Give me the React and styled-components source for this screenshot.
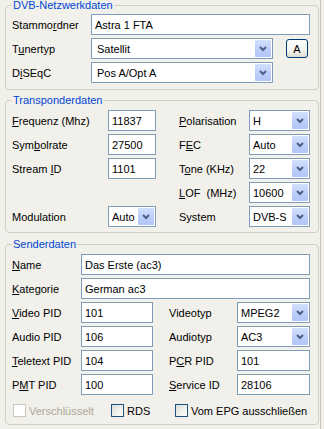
import React from "react";
import styled, { createGlobalStyle } from "styled-components";

const colors = {
  bg: "#f1f0ea",
  groupLine: "#d0d0bf",
  legend: "#0046d5",
  field: "#7f9db9",
  text: "#000000",
  disabled: "#aca899",
};

const GlobalStyle = createGlobalStyle`
  html, body {
    margin: 0;
    padding: 0;
    background: ${colors.bg};
  }
  body {
    font-family: Tahoma, "Liberation Sans", Arial, sans-serif;
    font-size: 11px;
    color: ${colors.text};
    overflow: hidden;
  }
`;

const Page = styled.div`
  width: 321px;
  height: 429px;
  box-sizing: border-box;
  padding-left: 5px;
  border-right: 1px solid #c9c6b6;
  display: flex;
  flex-direction: column;
  overflow: hidden;
`;

const Group = styled.fieldset`
  width: 314px;
  box-sizing: border-box;
  margin: ${(p) => p.$top}px 0 0 0;
  padding: ${(p) => p.$padTop || 3}px 8px ${(p) => p.$bottom}px 6px;
  border: 1px solid ${colors.groupLine};
  border-radius: 4px;
  min-inline-size: 0;
`;

const Legend = styled.legend`
  color: ${colors.legend};
  line-height: 13px;
  padding: 0 1px;
  margin-left: 0;
`;

const Grid = styled.div`
  display: grid;
  grid-template-columns: ${(p) => p.$cols};
  grid-auto-rows: 21px;
  row-gap: 3px;
  align-items: center;
`;

const Label = styled.span`
  white-space: pre;
  grid-column: ${(p) => p.$col || "auto"};
  & u {
    text-decoration: underline;
  }
`;

const TextField = styled.div`
  grid-column: ${(p) => p.$span || "auto"};
  height: 21px;
  box-sizing: border-box;
  border: 1px solid ${colors.field};
  background: #ffffff;
  padding: 0 3px;
  display: flex;
  align-items: center;
  white-space: nowrap;
  overflow: hidden;
`;

const ComboBox = styled.div`
  grid-column: ${(p) => p.$span || "auto"};
  height: 21px;
  box-sizing: border-box;
  border: 1px solid ${colors.field};
  background: #ffffff;
  display: flex;
  align-items: stretch;
  padding: 1px;
`;

const ComboText = styled.span`
  flex: 1;
  display: flex;
  align-items: center;
  padding-left: ${(p) => p.$pad || 2}px;
  white-space: nowrap;
  overflow: hidden;
`;

const DropButton = styled.span`
  width: 16px;
  flex: none;
  border-radius: 1px;
  background: linear-gradient(180deg, #d3e0fd 0%, #bccefa 55%, #b1c6f8 100%);
  display: flex;
  align-items: center;
  justify-content: center;
`;

const SmallButton = styled.div`
  grid-column: ${(p) => p.$col};
  width: 22px;
  height: 19px;
  box-sizing: border-box;
  border: 1px solid #003c74;
  border-radius: 3px;
  background: linear-gradient(180deg, #ffffff 0%, #f4f4f0 60%, #dcdad0 100%);
  display: flex;
  align-items: center;
  justify-content: center;
  justify-self: start;
`;

const CheckRow = styled.div`
  display: grid;
  grid-template-columns: 98px 64px 1fr;
  height: 13px;
  margin-top: 9px;
  align-items: center;
`;

const CheckItem = styled.label`
  display: flex;
  align-items: center;
  gap: 3px;
  padding-left: 1px;
  color: ${(p) => (p.$disabled ? colors.disabled : colors.text)};
  white-space: nowrap;
`;

const Box = styled.span`
  width: 13px;
  height: 13px;
  box-sizing: border-box;
  border: 1px solid ${(p) => (p.$disabled ? "#cac8bb" : "#1c5180")};
  background: ${(p) =>
    p.$disabled ? "#ffffff" : "linear-gradient(135deg, #dcdcd7 0%, #ffffff 100%)"};
`;

const Chevron = () => (
  <svg width="8" height="6" viewBox="0 0 8 6">
    <polyline points="1,1 4,4 7,1" fill="none" stroke="#4d6185" strokeWidth="2" />
  </svg>
);

const Combo = ({ value, span, pad }) => (
  <ComboBox $span={span}>
    <ComboText $pad={pad}>{value}</ComboText>
    <DropButton>
      <Chevron />
    </DropButton>
  </ComboBox>
);

const Check = ({ children, disabled }) => (
  <CheckItem $disabled={disabled}>
    <Box $disabled={disabled} />
    {children}
  </CheckItem>
);

export default function App() {
  return (
    <>
      <GlobalStyle />
      <Page>
        <Group $top={-1} $padTop={2} $bottom={6}>
          <Legend>DVB-Netzwerkdaten</Legend>
          <Grid $cols="79px 182px 13px 22px 2px">
            <Label>Stammo<u>r</u>dner</Label>
            <TextField $span="2 / -1">Astra 1 FTA</TextField>
            <Label>T<u>u</u>nertyp</Label>
            <Combo value="Satellit" pad={4} />
            <SmallButton $col="4">A</SmallButton>
            <Label $col="1">D<u>i</u>SEqC</Label>
            <Combo value="Pos A/Opt A" pad={4} />
          </Grid>
        </Group>

        <Group $top={4} $bottom={5}>
          <Legend>Transponderdaten</Legend>
          <Grid $cols="96px 48px 23px 70px 61px">
            <Label><u>F</u>requenz (Mhz)</Label>
            <TextField>11837</TextField>
            <Label $col="4"><u>P</u>olarisation</Label>
            <Combo value="H" />

            <Label>Sym<u>b</u>olrate</Label>
            <TextField>27500</TextField>
            <Label $col="4">F<u>E</u>C</Label>
            <Combo value="Auto" />

            <Label>Stream <u>I</u>D</Label>
            <TextField>1101</TextField>
            <Label $col="4">T<u>o</u>ne (KHz)</Label>
            <Combo value="22" />

            <Label $col="4"><u>L</u>OF  (MHz)</Label>
            <Combo value="10600" />

            <Label>Modulation</Label>
            <Combo value="Auto" />
            <Label $col="4">System</Label>
            <Combo value="DVB-S" />
          </Grid>
        </Group>

        <Group $top={5} $bottom={7}>
          <Legend>Senderdaten</Legend>
          <Grid $cols="69px 72px 16px 68px 73px">
            <Label><u>N</u>ame</Label>
            <TextField $span="2 / -1">Das Erste (ac3)</TextField>
            <Label><u>K</u>ategorie</Label>
            <TextField $span="2 / -1">German ac3</TextField>

            <Label><u>V</u>ideo PID</Label>
            <TextField>101</TextField>
            <Label $col="4">Videotyp</Label>
            <Combo value="MPEG2" />

            <Label>Audio PID</Label>
            <TextField>106</TextField>
            <Label $col="4">Audiotyp</Label>
            <Combo value="AC3" />

            <Label><u>T</u>eletext PID</Label>
            <TextField>104</TextField>
            <Label $col="4">P<u>C</u>R PID</Label>
            <TextField>101</TextField>

            <Label>P<u>M</u>T PID</Label>
            <TextField>100</TextField>
            <Label $col="4"><u>S</u>ervice ID</Label>
            <TextField>28106</TextField>
          </Grid>
          <CheckRow>
            <Check disabled>Verschlüsselt</Check>
            <Check>RDS</Check>
            <Check>Vom EPG ausschließen</Check>
          </CheckRow>
        </Group>
      </Page>
    </>
  );
}
